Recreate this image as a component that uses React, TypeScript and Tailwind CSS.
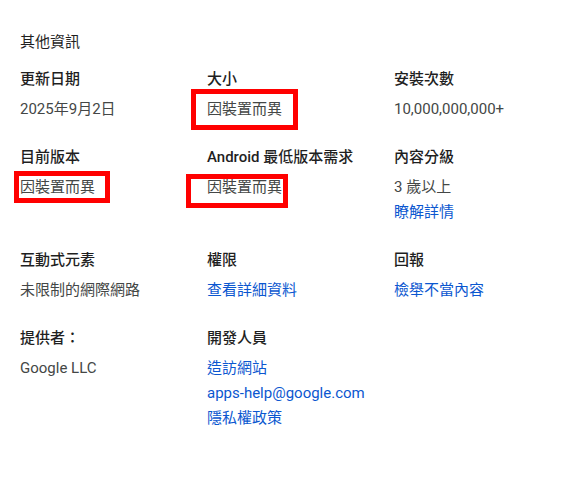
import type { ReactNode } from "react";

type Mark = "a" | "b" | "c";

const markClass: Record<Mark, string> = {
  a: "-left-[16px] -right-[16px] -top-[8px] -bottom-[8px]",
  b: "-left-[6px] -right-[15px] -top-[4px] -bottom-[3px]",
  c: "-left-[21px] -right-[6px] -top-[1px] -bottom-[8px]",
};

function Value({ children, link, mark }: { children: ReactNode; link?: boolean; mark?: Mark }) {
  return (
    <div className="h-[25px] leading-[25px]">
      <span className={"relative inline-block " + (link ? "text-[#0b57d0]" : "text-[#444746]")}>
        {children}
        {mark && <span className={"absolute border-[5px] border-[#ff0000] " + markClass[mark]} />}
      </span>
    </div>
  );
}

function Item({ title, children }: { title: string; children: ReactNode }) {
  return (
    <div>
      <div className="h-6 leading-6 font-medium text-[#1f1f1f] mb-[6px]">{title}</div>
      {children}
    </div>
  );
}

export default function App() {
  return (
    <div
      className="w-[586px] h-[477px] bg-white pl-5 pt-[30px] text-[15px]"
      style={{ fontFamily: 'Roboto, "Noto Sans CJK TC", sans-serif' }}
    >
      <div className="h-6 leading-6 text-[#1f1f1f] mb-[13px]">其他資訊</div>
      <div className="grid grid-cols-[187px_187px_187px] gap-y-[23px]">
        <Item title="更新日期">
          <Value>2025年9月2日</Value>
        </Item>
        <Item title="大小">
          <Value mark="a">因裝置而異</Value>
        </Item>
        <Item title="安裝次數">
          <Value>10,000,000,000+</Value>
        </Item>

        <Item title="目前版本">
          <Value mark="b">因裝置而異</Value>
        </Item>
        <Item title="Android 最低版本需求">
          <Value mark="c">因裝置而異</Value>
        </Item>
        <Item title="內容分級">
          <Value>3 歲以上</Value>
          <Value link>瞭解詳情</Value>
        </Item>

        <Item title="互動式元素">
          <Value>未限制的網際網路</Value>
        </Item>
        <Item title="權限">
          <Value link>查看詳細資料</Value>
        </Item>
        <Item title="回報">
          <Value link>檢舉不當內容</Value>
        </Item>

        <Item title="提供者：">
          <Value>Google LLC</Value>
        </Item>
        <Item title="開發人員">
          <Value link>造訪網站</Value>
          <Value link>apps-help@google.com</Value>
          <Value link>隱私權政策</Value>
        </Item>
      </div>
    </div>
  );
}
